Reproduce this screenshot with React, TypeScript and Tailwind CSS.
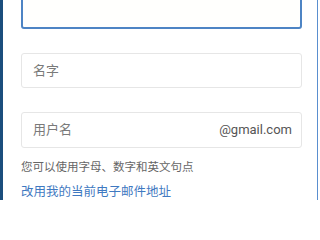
export default function App() {
  return (
    <div className="flex h-[200px] w-[320px] overflow-hidden bg-white font-['Roboto','Noto_Sans_CJK_SC',sans-serif]">
      <div className="w-[3px] shrink-0 bg-[#1b4e7d]" />
      <div className="flex flex-1 flex-col pl-[18px] pr-[15px]">
        <div className="-mt-[8px] h-[37px] rounded-[3px] border-2 border-[#4d84c4] bg-[#fffffd]" />
        <div className="mt-[24px] flex h-[36px] items-center rounded-[3px] border border-[#e6e6e6] px-[11px] text-[13px] text-[#7a7a7a]">
          名字
        </div>
        <div className="mt-[24px] flex h-[36px] items-center justify-between rounded-[3px] border border-[#e6e6e6] pl-[11px] pr-[9px] text-[13px]">
          <span className="text-[#7a7a7a]">用户名</span>
          <span className="text-[#555]">@gmail.com</span>
        </div>
        <p className="mt-[11px] text-[11.5px] leading-[16px] text-[#666]">您可以使用字母、数字和英文句点</p>
        <a className="mt-[9px] text-[12.5px] leading-[16px] text-[#3f79c1]">改用我的当前电子邮件地址</a>
      </div>
      <div className="w-[1px] shrink-0 bg-[#5a8fcf]" />
      <div className="w-[2px] shrink-0" />
    </div>
  );
}
